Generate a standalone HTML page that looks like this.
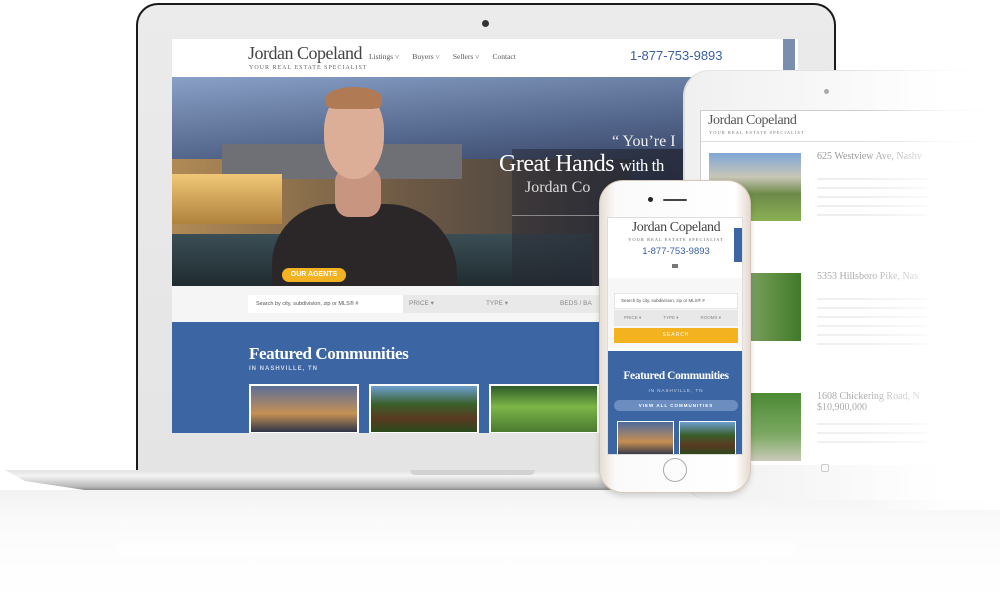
<!DOCTYPE html>
<html><head><meta charset="utf-8"><style>
*{margin:0;padding:0;box-sizing:border-box}
body{width:1000px;height:600px;background:#fff;position:relative;overflow:hidden;font-family:"Liberation Serif",serif}
.a{position:absolute}
.sans{font-family:"Liberation Sans",sans-serif}
</style></head><body>

<!-- reflection -->
<div class="a" style="left:0;top:490px;width:1000px;height:110px;background:linear-gradient(#f3f3f3,#fcfcfc 40%,#fff)"></div>
<div class="a" style="left:115px;top:505px;width:680px;height:50px;background:linear-gradient(#f7f7f7,#fff);border-radius:6px"></div>

<!-- laptop lid -->
<div class="a" style="left:136px;top:3px;width:700px;height:472px;background:#1a1a1a;border-radius:22px 22px 0 0"></div>
<div class="a" style="left:138px;top:5px;width:696px;height:470px;background:linear-gradient(#ebebeb,#e4e4e4);border-radius:20px 20px 0 0"></div>
<div class="a" style="left:482px;top:20px;width:7px;height:7px;border-radius:50%;background:#333"></div>

<!-- laptop screen -->
<div class="a" style="left:172px;top:39px;width:626px;height:394px;background:#fff;overflow:hidden">
  <div class="a" style="left:76px;top:4px;font-size:18px;color:#444;letter-spacing:-0.5px">Jordan Copeland</div>
  <div class="a" style="left:77px;top:26px;font-size:6px;color:#666;letter-spacing:1px">YOUR REAL ESTATE SPECIALIST</div>
  <div class="a" style="left:197px;top:13px;font-size:7.5px;color:#555">Listings ˅ &nbsp;&nbsp;&nbsp;&nbsp;&nbsp; Buyers ˅ &nbsp;&nbsp;&nbsp;&nbsp;&nbsp; Sellers ˅ &nbsp;&nbsp;&nbsp;&nbsp;&nbsp; Contact</div>
  <div class="a sans" style="left:458px;top:9px;font-size:13px;color:#3a5fa0">1-877-753-9893</div>
  <div class="a" style="left:611px;top:0;width:12px;height:36px;background:#7b8eae"></div>
  <!-- hero -->
  <div class="a" style="left:0;top:38px;width:626px;height:209px;background:linear-gradient(175deg,#8aa0c6 0%,#55688d 30%,#283455 60%,#1c2440 100%)"></div>
  <div class="a" style="left:0;top:120px;width:460px;height:127px;background:linear-gradient(90deg,#b18a55,#6e5a45 50%,#3a3a3e)"></div>
  <div class="a" style="left:50px;top:105px;width:240px;height:35px;background:#6f6f76"></div>
  <div class="a" style="left:0;top:135px;width:110px;height:50px;background:linear-gradient(#f0c777,#b0823d)"></div>
  <div class="a" style="left:0;top:195px;width:420px;height:52px;background:linear-gradient(#3b4e55,#1f2c30)"></div>
  <div class="a" style="left:340px;top:110px;width:286px;height:137px;background:linear-gradient(90deg,rgba(40,40,50,.5),#232836)"></div>
  <!-- person -->
  <div class="a" style="left:100px;top:165px;width:185px;height:90px;background:#2b2728;border-radius:60px 70px 0 0"></div>
  <div class="a" style="left:163px;top:128px;width:46px;height:50px;background:#c89580;border-radius:30%"></div>
  <div class="a" style="left:152px;top:52px;width:60px;height:88px;background:#dcae97;border-radius:45% 45% 48% 48%"></div>
  <div class="a" style="left:154px;top:48px;width:56px;height:22px;background:#b07a55;border-radius:50% 50% 20% 20%"></div>
  <div class="a sans" style="left:110px;top:229px;width:64px;height:14px;background:#f3b222;border-radius:8px;color:#fff;font-size:7px;font-weight:bold;text-align:center;line-height:14px">OUR AGENTS</div>
  <div class="a" style="left:440px;top:94px;font-size:16px;color:#eee">“ You’re I</div>
  <div class="a" style="left:327px;top:112px;font-size:24px;color:#fff;letter-spacing:-0.5px">Great Hands <span style="font-size:17px">with th</span></div>
  <div class="a" style="left:353px;top:140px;font-size:16px;color:#ddd">Jordan Co</div>
  <div class="a" style="left:340px;top:176px;width:200px;height:1px;background:#888"></div>
  <!-- search -->
  <div class="a" style="left:0;top:247px;width:626px;height:36px;background:#f5f5f5"></div>
  <div class="a sans" style="left:76px;top:256px;width:155px;height:18px;background:#fff;font-size:5.5px;color:#555;padding:6px 8px">Search by city, subdivision, zip or MLS® #</div>
  <div class="a sans" style="left:231px;top:256px;width:395px;height:18px;background:#e9e9e9;font-size:6.5px;color:#888;line-height:18px"><span style="margin-left:6px">PRICE ▾</span><span style="margin-left:52px">TYPE ▾</span><span style="margin-left:52px">BEDS / BA</span></div>
  <!-- blue -->
  <div class="a" style="left:0;top:283px;width:626px;height:111px;background:#3c65a3"></div>
  <div class="a" style="left:77px;top:305px;font-size:17px;font-weight:bold;color:#fff;letter-spacing:-0.4px">Featured Communities</div>
  <div class="a sans" style="left:77px;top:327px;font-size:6px;font-weight:bold;color:#cfd8ea;letter-spacing:1px">IN NASHVILLE, TN</div>
  <div class="a" style="left:77px;top:345px;width:110px;height:50px;background:linear-gradient(#5b6e99,#c69054 60%,#2f3548);border:2px solid #fff"></div>
  <div class="a" style="left:197px;top:345px;width:110px;height:50px;background:linear-gradient(#6c9fd0,#3a5f2a 40%,#5a3a22 70%,#2a4a1c);border:2px solid #fff"></div>
  <div class="a" style="left:317px;top:345px;width:110px;height:50px;background:linear-gradient(#2f5a2a,#7db648 45%,#4a7a30);border:2px solid #fff"></div>
</div>

<!-- laptop base -->
<div class="a" style="left:5px;top:470px;width:995px;height:20px;background:linear-gradient(#e2e2e2,#f3f3f3 30%,#b5b5b5 85%,#8a8a8a);clip-path:polygon(0 0,100% 0,100% 100%,8% 100%,2% 55%)"></div>
<div class="a" style="left:410px;top:470px;width:125px;height:5px;background:#d2d2d2;border-radius:0 0 6px 6px"></div>

<!-- tablet -->
<div class="a" style="left:683px;top:70px;width:330px;height:430px;background:linear-gradient(90deg,#f0f0f0,#fbfbfb 60%,#fff);border-radius:26px 0 0 26px;border-left:2px solid #ddd;border-top:1px solid #e4e4e4"></div>
<div class="a" style="left:824px;top:89px;width:5px;height:5px;border-radius:50%;background:#aaa"></div>
<div class="a" style="left:700px;top:110px;width:300px;height:355px;background:#fff;border-left:1px solid #ccc;border-top:1px solid #ccc;overflow:hidden">
  <div class="a" style="left:7px;top:2px;font-size:14px;color:#555;letter-spacing:-0.4px">Jordan Copeland</div>
  <div class="a" style="left:8px;top:19px;font-size:4.5px;color:#777;letter-spacing:1px">YOUR REAL ESTATE SPECIALIST</div>
  <div class="a" style="left:0;top:30px;width:300px;height:1px;background:#ddd"></div>
  <div class="a" style="left:8px;top:42px;width:92px;height:68px;background:linear-gradient(#7fa6d6,#c9c6b7 35%,#6d8a4a 60%,#8bb052)"></div>
  <div class="a" style="left:8px;top:162px;width:92px;height:68px;background:linear-gradient(90deg,#aab8c6,#6f9850 55%,#3f7a2a)"></div>
  <div class="a" style="left:8px;top:282px;width:92px;height:68px;background:linear-gradient(#4c8a35,#7aa860 60%,#c9c9b9)"></div>
  <div class="a" style="left:116px;top:40px;font-size:10px;color:#999">625 Westview Ave, Nashv</div>
  <div class="a" style="left:116px;top:160px;font-size:10px;color:#aaa">5353 Hillsboro Pike, Nas</div>
  <div class="a" style="left:116px;top:280px;font-size:10px;color:#aaa;line-height:11px">1608 Chickering Road, N<br>$10,900,000</div>
  <div class="a" style="left:116px;top:60px;width:110px;height:48px;background:repeating-linear-gradient(#fff 0 7px,#eee 7px 9px)"></div>
  <div class="a" style="left:116px;top:180px;width:110px;height:60px;background:repeating-linear-gradient(#fff 0 7px,#f0f0f0 7px 9px)"></div>
  <div class="a" style="left:116px;top:305px;width:110px;height:30px;background:repeating-linear-gradient(#fff 0 7px,#f0f0f0 7px 9px)"></div>
</div>
<div class="a" style="left:821px;top:464px;width:8px;height:8px;border:1px solid #ccc;border-radius:2px"></div>
<!-- right fade -->
<div class="a" style="left:860px;top:60px;width:140px;height:450px;background:linear-gradient(90deg,rgba(255,255,255,0),rgba(255,255,255,.85) 60%,#fff)"></div>

<!-- iPhone -->
<div class="a" style="left:599px;top:180px;width:152px;height:313px;background:linear-gradient(90deg,#e7dcd2,#fafafa 10%,#fff 90%,#e5dad0);border-radius:24px;border:1px solid #d6c7b8;box-shadow:0 3px 6px rgba(0,0,0,.15)"></div>
<div class="a" style="left:648px;top:197px;width:5px;height:5px;border-radius:50%;background:#222"></div>
<div class="a" style="left:663px;top:199px;width:24px;height:2px;border-radius:1px;background:#444"></div>
<div class="a" style="left:663px;top:458px;width:24px;height:24px;border-radius:50%;border:1px solid #aaa"></div>
<div class="a" style="left:607px;top:217px;width:136px;height:238px;background:#fff;overflow:hidden;border:1px solid #ddd">
  <div class="a" style="left:0;top:2px;width:136px;text-align:center;font-size:14px;color:#444;letter-spacing:-0.4px">Jordan Copeland</div>
  <div class="a" style="left:0;top:19px;width:136px;text-align:center;font-size:4.5px;color:#666;letter-spacing:1px">YOUR REAL ESTATE SPECIALIST</div>
  <div class="a sans" style="left:0;top:28px;width:136px;text-align:center;font-size:9.5px;color:#3a5fa0">1-877-753-9893</div>
  <div class="a" style="left:64px;top:46px;width:6px;height:4px;background:#777"></div>
  <div class="a" style="left:126px;top:10px;width:10px;height:34px;background:#3c65a3"></div>
  <div class="a" style="left:0;top:60px;width:136px;height:70px;background:#f7f7f7"></div>
  <div class="a sans" style="left:6px;top:75px;width:124px;height:16px;background:#fff;border:1px solid #e5e5e5;font-size:4.5px;color:#555;padding:4px 6px">Search by city, subdivision, zip or MLS® #</div>
  <div class="a sans" style="left:6px;top:92px;width:124px;height:16px;background:#e8e8e8;font-size:4.5px;color:#888;line-height:16px"><span style="margin-left:10px">PRICE ▾</span><span style="margin-left:22px">TYPE ▾</span><span style="margin-left:22px">ROOMS ▾</span></div>
  <div class="a sans" style="left:6px;top:110px;width:124px;height:15px;background:#f3b21f;font-size:5px;color:#fff;text-align:center;line-height:15px;letter-spacing:1px">SEARCH</div>
  <div class="a" style="left:0;top:133px;width:136px;height:105px;background:#3c65a3"></div>
  <div class="a" style="left:0;top:152px;width:136px;text-align:center;font-size:11.5px;font-weight:bold;color:#fff;letter-spacing:-0.4px">Featured Communities</div>
  <div class="a sans" style="left:0;top:170px;width:136px;text-align:center;font-size:4.5px;color:#cdd7ea;letter-spacing:1px">IN NASHVILLE, TN</div>
  <div class="a sans" style="left:6px;top:182px;width:124px;height:11px;background:#6b8dc0;border-radius:6px;font-size:4.5px;font-weight:bold;color:#fff;text-align:center;line-height:11px;letter-spacing:1px">VIEW ALL COMMUNITIES</div>
  <div class="a" style="left:9px;top:203px;width:57px;height:35px;background:linear-gradient(#4e6a9c,#c68f52 60%,#2e3448);border:1px solid #fff"></div>
  <div class="a" style="left:71px;top:203px;width:57px;height:35px;background:linear-gradient(#6c9fd0,#3a5f2a 40%,#5a3a22 70%,#2a4a1c);border:1px solid #fff"></div>
</div>
</body></html>
